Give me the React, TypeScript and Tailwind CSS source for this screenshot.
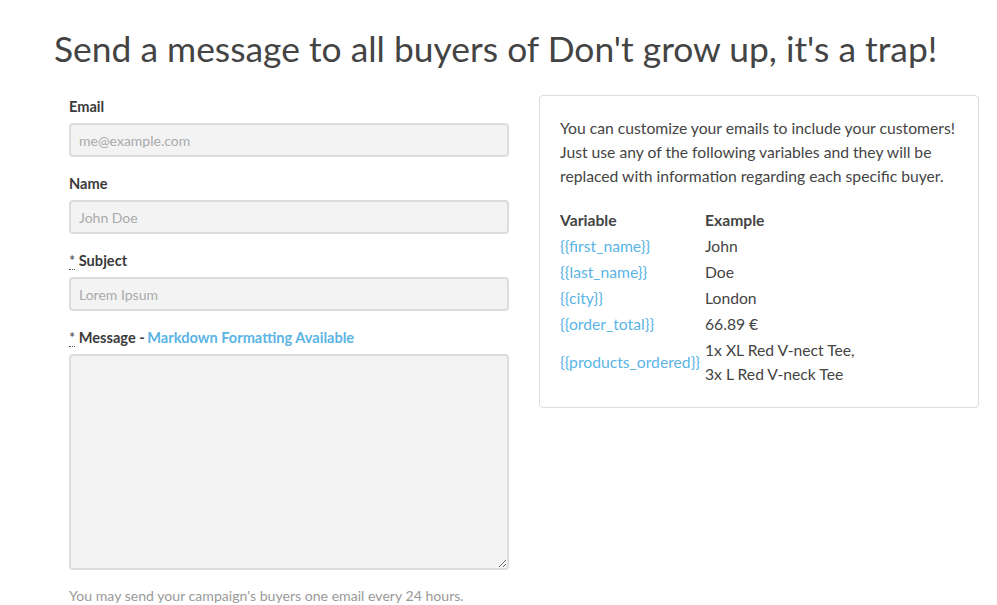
import React from "react";

const font = { fontFamily: "Lato, 'Open Sans', sans-serif" };

function Label({ children }: { children: React.ReactNode }) {
  return (
    <label className="block h-[20px] leading-[20px] text-[14.6px] font-bold text-[#3a3a3a] mb-[6px] whitespace-nowrap">
      {children}
    </label>
  );
}

function Req() {
  return (
    <abbr title="required" className="no-underline border-b border-dotted border-[#555] cursor-help font-normal">
      *
    </abbr>
  );
}

function Input({ placeholder }: { placeholder: string }) {
  return (
    <input
      placeholder={placeholder}
      className="block w-full h-[34px] rounded-[4px] border-2 border-[#dcdcdc] bg-[#f3f3f3] px-[8px] text-[14px] text-[#555] placeholder:text-[#aaaaaa] outline-none"
    />
  );
}

const vars: [string, React.ReactNode][] = [
  ["{{first_name}}", "John"],
  ["{{last_name}}", "Doe"],
  ["{{city}}", "London"],
  ["{{order_total}}", "66.89 €"],
  [
    "{{products_ordered}}",
    <>
      1x XL Red V-nect Tee,
      <br />
      3x L Red V-neck Tee
    </>,
  ],
];

export default function App() {
  return (
    <div style={font} className="w-[997px] h-[605px] bg-white overflow-hidden text-[#444]">
      <h1 className="pl-[54px] pt-[27px] text-[35.4px] leading-[44px] font-normal text-[#444] whitespace-nowrap">
        Send a message to all buyers of Don't grow up, it's a trap!
      </h1>
      <div className="flex pl-[69px] pt-[26px] gap-[30px]">
        <div className="w-[440px] shrink-0">
          <div className="mb-[17px]">
            <Label>Email</Label>
            <Input placeholder="me@example.com" />
          </div>
          <div className="mb-[17px]">
            <Label>Name</Label>
            <Input placeholder="John Doe" />
          </div>
          <div className="mb-[17px]">
            <Label>
              <Req /> Subject
            </Label>
            <Input placeholder="Lorem Ipsum" />
          </div>
          <div>
            <Label>
              <Req /> Message -{" "}
              <a className="ml-[-1px] text-[#5bb4e5]">Markdown Formatting Available</a>
            </Label>
            <textarea className="block w-full h-[216px] rounded-[4px] border-2 border-[#dcdcdc] bg-[#f3f3f3] px-[8px] py-[6px] text-[14px] outline-none resize-y" />
          </div>
          <p className="mt-[16px] text-[14.1px] leading-[20px] text-[#999] whitespace-nowrap">
            You may send your campaign's buyers one email every 24 hours.
          </p>
        </div>
        <div className="w-[440px] shrink-0 self-start -mt-[2px] rounded-[4px] border border-[#dddddd] px-[20px] pt-[20px] pb-[21px] text-[15.7px] leading-[24px] text-[#444]">
          <p>
            You can customize your emails to include your customers! Just use any of the following variables and they
            will be replaced with information regarding each specific buyer.
          </p>
          <table className="mt-[19px] border-collapse">
            <thead>
              <tr>
                <th className="w-[145px] text-left font-bold h-[26px] p-0">Variable</th>
                <th className="text-left font-bold h-[26px] p-0">Example</th>
              </tr>
            </thead>
            <tbody>
              {vars.map(([v, e]) => (
                <tr key={v}>
                  <td className="h-[26px] p-0 text-[#5bb4e5] align-middle whitespace-nowrap">{v}</td>
                  <td className="h-[26px] p-0 align-middle whitespace-nowrap">
                    {typeof e === "string" ? e : <div className="pt-[1px]">{e}</div>}
                  </td>
                </tr>
              ))}
            </tbody>
          </table>
        </div>
      </div>
    </div>
  );
}
